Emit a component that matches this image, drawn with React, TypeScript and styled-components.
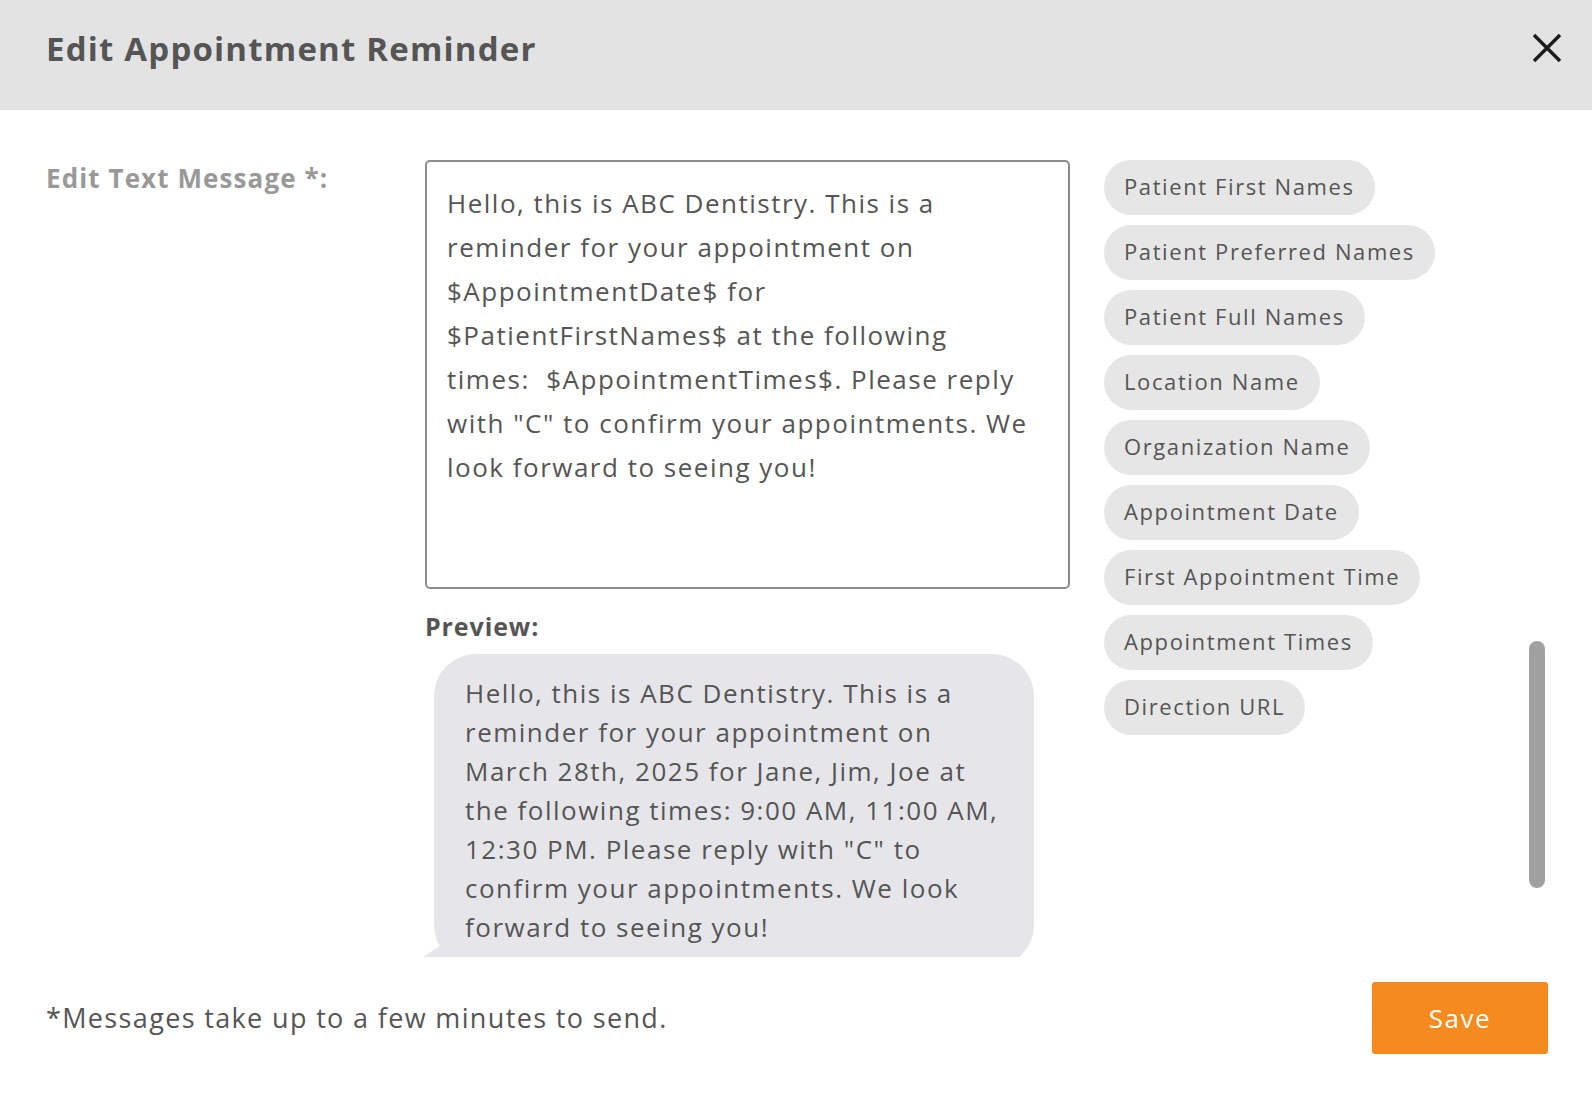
import styled, { createGlobalStyle } from "styled-components";

const GlobalStyle = createGlobalStyle`
  html, body {
    margin: 0;
    padding: 0;
    background: #ffffff;
    font-family: "Open Sans", "Noto Sans", sans-serif;
    color: #555555;
  }
  * { box-sizing: border-box; }
`;

const TEMPLATE =
  'Hello, this is ABC Dentistry. This is a reminder for your appointment on $AppointmentDate$ for $PatientFirstNames$ at the following times:  $AppointmentTimes$. Please reply with "C" to confirm your appointments. We look forward to seeing you!';

const PREVIEW =
  'Hello, this is ABC Dentistry. This is a reminder for your appointment on March 28th, 2025 for Jane, Jim, Joe at the following times: 9:00 AM, 11:00 AM, 12:30 PM. Please reply with "C" to confirm your appointments. We look forward to seeing you!';

const TAGS = [
  "Patient First Names",
  "Patient Preferred Names",
  "Patient Full Names",
  "Location Name",
  "Organization Name",
  "Appointment Date",
  "First Appointment Time",
  "Appointment Times",
  "Direction URL",
];

const App = () => {
  return (
    <>
      <GlobalStyle />
      <Modal>
        <Header>
          <Title>Edit Appointment Reminder</Title>
          <CloseButton aria-label="Close">
            <svg width="30" height="30" viewBox="0 0 30 30">
              <path
                d="M2 2 L28 28 M28 2 L2 28"
                stroke="#1c1c1c"
                strokeWidth="3.4"
              />
            </svg>
          </CloseButton>
        </Header>
        <ScrollArea>
          <Body>
            <FieldLabel>Edit Text Message *:</FieldLabel>
            <Editor>
              <MessageInput defaultValue={TEMPLATE} />
              <PreviewLabel>Preview:</PreviewLabel>
              <Bubble>{PREVIEW}</Bubble>
            </Editor>
            <TagList>
              {TAGS.map((tag) => (
                <Tag key={tag}>{tag}</Tag>
              ))}
            </TagList>
          </Body>
          <ScrollThumb />
        </ScrollArea>
        <Footer>
          <Note>*Messages take up to a few minutes to send.</Note>
          <SaveButton>Save</SaveButton>
        </Footer>
      </Modal>
    </>
  );
};

export default App;

const Modal = styled.div`
  width: 1592px;
  height: 1094px;
  display: flex;
  flex-direction: column;
  background: #ffffff;
`;

const Header = styled.div`
  height: 110px;
  flex-shrink: 0;
  background: #e3e3e3;
  display: flex;
  align-items: center;
  justify-content: space-between;
  padding: 0 30px 0 46px;
`;

const Title = styled.h1`
  margin: 0;
  font-size: 33px;
  font-weight: 700;
  letter-spacing: 1.2px;
  color: #555555;
  padding-bottom: 14px;
`;

const CloseButton = styled.button`
  border: 0;
  background: transparent;
  padding: 0;
  width: 30px;
  height: 30px;
  margin-bottom: 14px;
  cursor: pointer;
  display: flex;
`;

const ScrollArea = styled.div`
  position: relative;
  height: 847px;
  flex-shrink: 0;
  overflow: hidden;
`;

const ScrollThumb = styled.div`
  position: absolute;
  right: 47px;
  top: 531px;
  width: 16px;
  height: 247px;
  border-radius: 8px;
  background: #a0a0a0;
`;

const Body = styled.div`
  display: grid;
  grid-template-columns: 345px 645px auto;
  column-gap: 34px;
  padding: 50px 0 0 46px;
`;

const FieldLabel = styled.div`
  font-size: 26px;
  font-weight: 700;
  letter-spacing: 1.1px;
  color: #999999;
`;

const Editor = styled.div`
  display: flex;
  flex-direction: column;
`;

const MessageInput = styled.textarea`
  width: 645px;
  height: 429px;
  resize: none;
  border: 2px solid #8c8c8c;
  border-radius: 5px;
  padding: 19px 37px 20px 20px;
  font-family: "Open Sans", "Noto Sans", sans-serif;
  font-size: 26px;
  letter-spacing: 1.5px;
  line-height: 44px;
  color: #555555;
  outline: none;
  overflow: hidden;
`;

const PreviewLabel = styled.div`
  margin-top: 20px;
  font-size: 25px;
  font-weight: 700;
  letter-spacing: 0.9px;
  color: #555555;
`;

const Bubble = styled.div`
  position: relative;
  margin: 11px 0 0 9px;
  width: 600px;
  padding: 20px 26px 20px 31px;
  background: #e6e6ea;
  border-radius: 42px;
  font-size: 26px;
  letter-spacing: 1.5px;
  line-height: 39px;
  color: #555555;

  &::before {
    content: "";
    position: absolute;
    left: -14px;
    bottom: 8px;
    width: 40px;
    height: 26px;
    background: #e6e6ea;
    clip-path: polygon(100% 0, 100% 100%, 0 100%);
  }
`;

const TagList = styled.div`
  display: flex;
  flex-direction: column;
  align-items: flex-start;
  gap: 10px;
`;

const Tag = styled.button`
  height: 55px;
  border: 0;
  border-radius: 28px;
  background: #e6e6e6;
  padding: 0 20px 3px;
  font-family: "Open Sans", "Noto Sans", sans-serif;
  font-size: 22px;
  letter-spacing: 1.6px;
  color: #555555;
  cursor: pointer;
`;

const Footer = styled.div`
  flex: 1;
  display: flex;
  align-items: center;
  justify-content: space-between;
  padding: 0 44px 16px 46px;
`;

const Note = styled.div`
  font-size: 27px;
  letter-spacing: 1.35px;
  color: #555555;
`;

const SaveButton = styled.button`
  width: 176px;
  height: 72px;
  border: 0;
  border-radius: 3px;
  background: #f58a1f;
  color: #ffffff;
  font-family: "Open Sans", "Noto Sans", sans-serif;
  font-size: 26px;
  letter-spacing: 1.5px;
  cursor: pointer;
`;
